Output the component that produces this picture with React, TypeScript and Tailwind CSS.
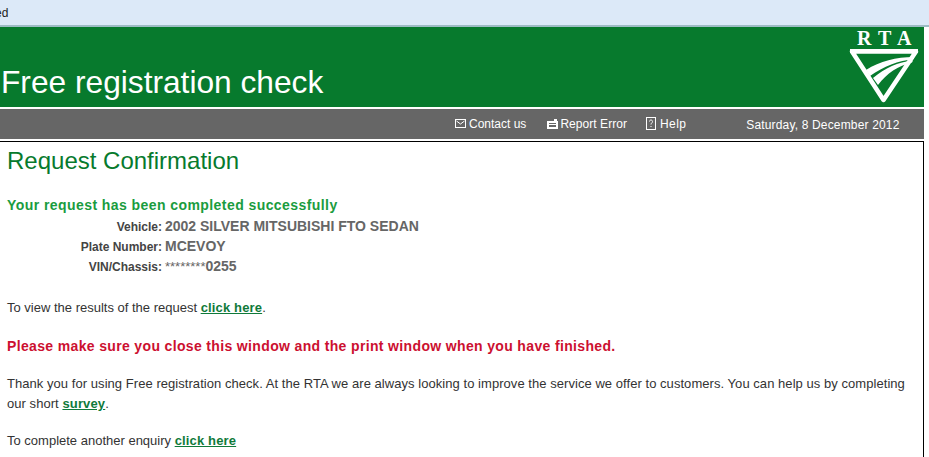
const FONT = "font-['Liberation_Sans',Arial,sans-serif]";

const RtaLogo = () => (
  <svg width="72" height="78" viewBox="0 0 72 78" className="mb-[3px] mr-[4px]">
    <text x="9 30 49" y="19" fill="#fff" fontFamily="'Liberation Serif', serif" fontWeight="bold" fontSize="20">RTA</text>
    <path d="M4 25.5H68L35.5 74Z" fill="none" stroke="#fff" strokeWidth="4.5" strokeLinejoin="round" />
    <path d="M2 23H70V27H2Z" fill="#fff" />
    <path d="M66 31C48 31 32 35 18 44L22 50C36 40 50 35 66 33Z" fill="#fff" />
    <path d="M65 34.5C50 36 37 42 25 52L30 59C39 47 50 40 64 36.5Z" fill="#fff" />
  </svg>
);

const MailIcon = () => (
  <svg width="11" height="9" viewBox="0 0 11 9" className="mr-[3px] -mt-[1px]">
    <rect x="0.5" y="0.5" width="10" height="8" fill="none" stroke="#fff" />
    <path d="M1.5 2L5.5 5L9.5 2" fill="none" stroke="#fff" />
  </svg>
);

const ReportIcon = () => (
  <svg width="11" height="10" viewBox="0 0 11 10" className="mr-[2px] -mt-[1px]">
    <path d="M0 2H7V0H10V2H11V10H0Z" fill="#fff" />
    <rect x="2" y="4" width="7" height="1" fill="#666" />
    <rect x="2" y="6" width="7" height="2" fill="#666" />
  </svg>
);

const HelpIcon = () => (
  <svg width="10" height="13" viewBox="0 0 10 13" className="mr-[4px] -mt-[1px]">
    <rect x="0.5" y="0.5" width="9" height="12" fill="none" stroke="#fff" />
    <path d="M3.5 4.5C3.5 2.5 6.5 2.5 6.5 4.5C6.5 6 5 6 5 7.5M5 9V10" fill="none" stroke="#fff" />
  </svg>
);

const Details = [
  { label: "Vehicle:", value: "2002 SILVER MITSUBISHI FTO SEDAN" },
  { label: "Plate Number:", value: "MCEVOY" },
];

const TextLink = ({ children }: { children: React.ReactNode }) => (
  <a href="#" className="font-bold tracking-[0.15px] text-[#0f7a3a] underline">{children}</a>
);

export default function App() {
  return (
    <div className={`${FONT} flex h-[457px] w-[929px] flex-col overflow-hidden bg-white text-[13px] text-[#333]`}>
      <div className="h-[25px] bg-[#dce9f8] pt-[6px] text-[12px] leading-[14px] text-[#222]">
        <span className="-ml-[5px]">ed</span>
      </div>
      <div className="h-[2px] bg-[#9dbcc4]" />

      <header className="flex h-[80px] w-[924px] items-end justify-between bg-[#077a2d]">
        <h1 className="mb-[7px] ml-[1px] text-[31.7px] leading-[36px] font-normal text-white">Free registration check</h1>
        <RtaLogo />
      </header>

      <nav className="mt-[2px] flex h-[30px] w-[924px] items-center bg-[#666] text-[12px] text-white">
        <div className="ml-[455px] flex items-center">
          <a href="#" className="flex items-center"><MailIcon />Contact us</a>
          <a href="#" className="ml-[21px] flex items-center tracking-[0.05px]"><ReportIcon />Report Error</a>
          <a href="#" className="ml-[19px] flex items-center tracking-[0.4px]"><HelpIcon />Help</a>
        </div>
        <span className="ml-[60px] mt-[2px] tracking-[0.16px]">Saturday, 8 December 2012</span>
      </nav>

      <main className="mt-[2px] w-[924px] flex-1 border-t border-r border-black pl-[7px]">
        <h2 className="mt-[5px] text-[24px] leading-[28px] font-normal text-[#077a2d]">Request Confirmation</h2>

        <p className="mt-[22px] text-[14px] leading-[16px] font-bold tracking-[0.43px] text-[#1a9c3e]">Your request has been completed successfully</p>

        <dl className="mt-[3px] font-bold">
          {Details.map((row) => (
            <div key={row.label} className="grid h-[20px] grid-cols-[155px_1fr] items-center gap-x-[3px]">
              <dt className="text-right text-[12px] text-[#444]">{row.label}</dt>
              <dd className="text-[14px] text-[#666]">{row.value}</dd>
            </div>
          ))}
          <div className="grid h-[20px] grid-cols-[155px_1fr] items-center gap-x-[3px]">
            <dt className="text-right text-[12px] text-[#444]">VIN/Chassis:</dt>
            <dd className="text-[14px] text-[#666]"><span className="text-[13px] font-normal">********</span>0255</dd>
          </div>
        </dl>

        <p className="mt-[24px] leading-[16px]">To view the results of the request <TextLink>click here</TextLink>.</p>

        <p className="mt-[22px] text-[14px] leading-[16px] font-bold tracking-[0.35px] text-[#cc1030]">Please make sure you close this window and the print window when you have finished.</p>

        <p className="mt-[20px] w-[905px] leading-[20px] tracking-[0.05px]">
          Thank you for using Free registration check. At the RTA we are always looking to improve the service we offer to customers. You can help us by completing our short <TextLink>survey</TextLink>.
        </p>

        <p className="mt-[17px] leading-[20px]">To complete another enquiry <TextLink>click here</TextLink></p>
      </main>
    </div>
  );
}
